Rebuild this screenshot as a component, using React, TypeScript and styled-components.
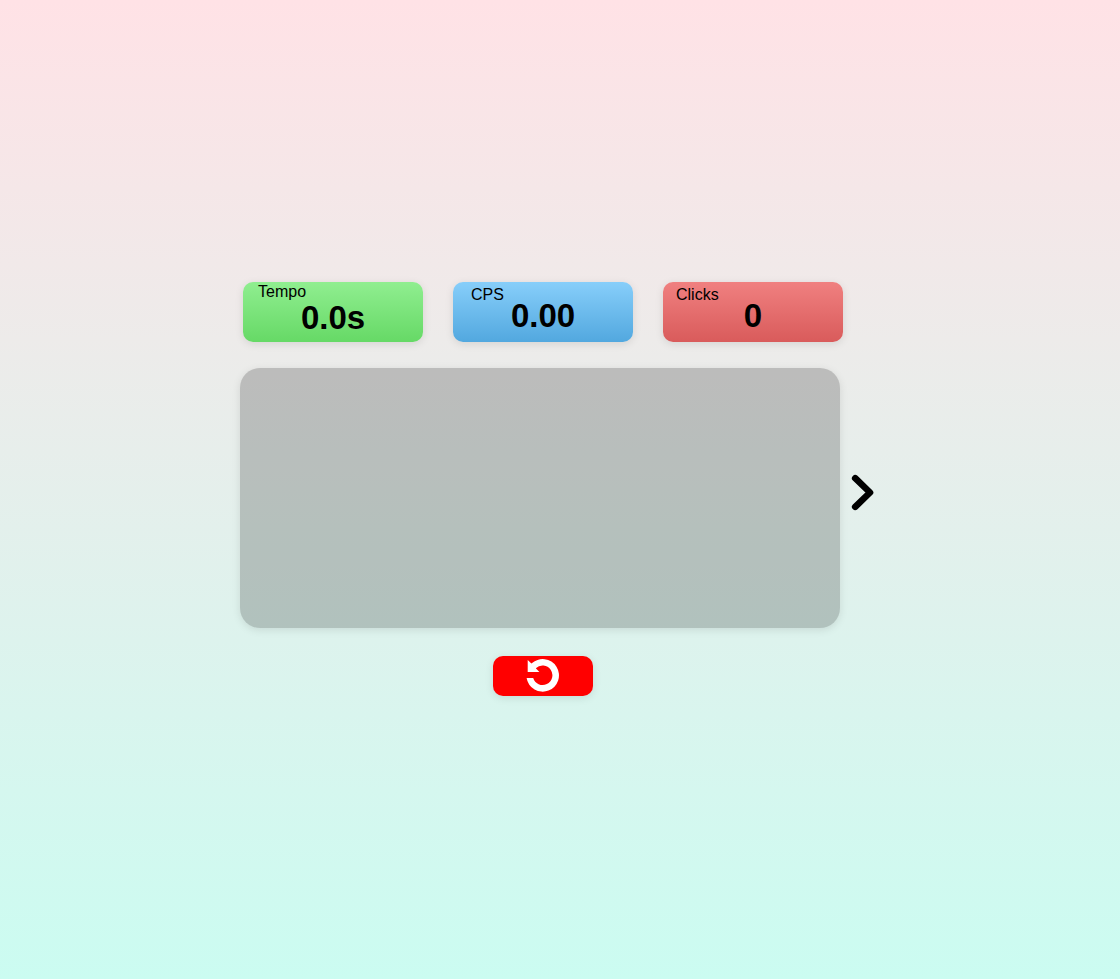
import React, { useEffect, useRef, useState } from "react";
import styled, { createGlobalStyle } from "styled-components";

const GlobalStyle = createGlobalStyle`
  *, *::before, *::after { box-sizing: border-box; }
  body {
    margin: 0;
    font-family: "Liberation Sans", Arial, sans-serif;
    color: #000;
  }
`;

const Page = styled.main`
  min-height: 100vh;
  padding-bottom: 1px;
  display: flex;
  align-items: center;
  justify-content: center;
  background: linear-gradient(to bottom, #ffe2e6, #cbfcf1);
`;

const Game = styled.div`
  width: 100%;
  max-width: 640px;
  display: grid;
  grid-template-columns: minmax(0, 1fr) 40px;
`;

const Stats = styled.section`
  display: grid;
  grid-template-columns: repeat(3, 1fr);
  gap: 30px;
  margin: 0 -3px 26px 3px;
  grid-column: 1;
`;

const Card = styled.div<{ $from: string; $to: string; $top: number }>`
  height: 60px;
  padding-top: ${(p) => p.$top}px;
  border-radius: 10px;
  background: linear-gradient(to bottom, ${(p) => p.$from}, ${(p) => p.$to});
  box-shadow: 0 2px 8px rgba(0, 0, 0, 0.1);
`;

const Label = styled.div<{ $inset: number; $gap: number }>`
  padding-left: ${(p) => p.$inset}px;
  margin-bottom: ${(p) => p.$gap}px;
  font-size: 16px;
  line-height: 18px;
`;

const Value = styled.div`
  font-size: 33px;
  font-weight: 700;
  line-height: 24px;
  text-align: center;
`;

const ClickArea = styled.button`
  grid-column: 1;
  height: 260px;
  padding: 0;
  border: 0;
  border-radius: 20px;
  background: rgba(0, 0, 0, 0.2);
  box-shadow: 0 2px 8px rgba(0, 0, 0, 0.1);
  cursor: pointer;
`;

const NextButton = styled.button`
  grid-column: 2;
  display: flex;
  align-items: center;
  justify-content: center;
  padding: 0 0 11px 5px;
  border: 0;
  background: none;
  cursor: pointer;
`;

const ResetButton = styled.button`
  grid-column: 1;
  justify-self: center;
  display: flex;
  align-items: center;
  justify-content: center;
  width: 100px;
  height: 40px;
  margin: 28px 0 0 6px;
  padding: 0 0 4px;
  border: 0;
  border-radius: 10px;
  background: #f00;
  box-shadow: 0 2px 8px rgba(0, 0, 0, 0.1);
  cursor: pointer;
`;

export default function App() {
  const [clicks, setClicks] = useState(0);
  const [elapsed, setElapsed] = useState(0);
  const start = useRef<number | null>(null);

  useEffect(() => {
    const timer = setInterval(() => {
      if (start.current !== null) setElapsed((Date.now() - start.current) / 1000);
    }, 100);
    return () => clearInterval(timer);
  }, []);

  const click = () => {
    if (start.current === null) start.current = Date.now();
    setClicks((n) => n + 1);
  };

  const reset = () => {
    start.current = null;
    setClicks(0);
    setElapsed(0);
  };

  const cps = elapsed > 0 ? clicks / elapsed : 0;

  return (
    <>
      <GlobalStyle />
      <Page>
        <Game>
          <Stats>
            <Card $from="#90ee90" $to="#66d966" $top={1}>
              <Label $inset={15} $gap={5}>Tempo</Label>
              <Value>{elapsed.toFixed(1)}s</Value>
            </Card>
            <Card $from="#87cefa" $to="#52a8df" $top={4}>
              <Label $inset={18} $gap={0}>CPS</Label>
              <Value>{cps.toFixed(2)}</Value>
            </Card>
            <Card $from="#f08080" $to="#d95b5b" $top={4}>
              <Label $inset={13} $gap={0}>Clicks</Label>
              <Value>{clicks}</Value>
            </Card>
          </Stats>
          <ClickArea aria-label="Click area" onClick={click} />
          <NextButton aria-label="Next">
            <svg width="23" height="37" viewBox="0 0 23 37" fill="none">
              <path
                d="M4.2 4.2 L19 18.5 L4.2 32.8"
                stroke="#000"
                strokeWidth="6.6"
                strokeLinecap="round"
                strokeLinejoin="round"
              />
            </svg>
          </NextButton>
          <ResetButton aria-label="Reset" onClick={reset}>
            <svg width="34" height="36" viewBox="0 0 34 36">
              <path
                d="M0.6 22 H7.2 A9.8 9.8 0 1 0 9.8 12.2 L13.4 16 H1.7 V4 L5.4 7.6 A16.3 16.3 0 1 1 0.6 22 Z"
                fill="#fff"
              />
            </svg>
          </ResetButton>
        </Game>
      </Page>
    </>
  );
}
